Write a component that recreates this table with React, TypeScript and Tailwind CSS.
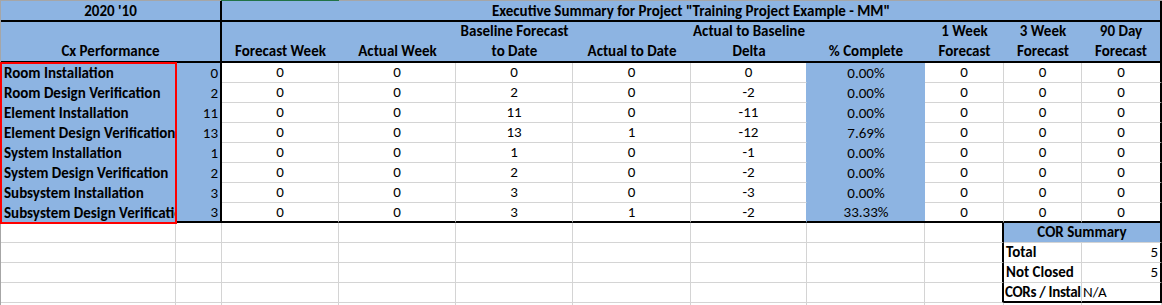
import React from "react";

type Row = {
  label: string;
  count: number;
  values: (number | string)[];
  pct: string;
  forecasts: number[];
};

const rows: Row[] = [
  { label: "Room Installation", count: 0, values: [0, 0, 0, 0, 0], pct: "0.00%", forecasts: [0, 0, 0] },
  { label: "Room Design Verification", count: 2, values: [0, 0, 2, 0, -2], pct: "0.00%", forecasts: [0, 0, 0] },
  { label: "Element Installation", count: 11, values: [0, 0, 11, 0, -11], pct: "0.00%", forecasts: [0, 0, 0] },
  { label: "Element Design Verification", count: 13, values: [0, 0, 13, 1, -12], pct: "7.69%", forecasts: [0, 0, 0] },
  { label: "System Installation", count: 1, values: [0, 0, 1, 0, -1], pct: "0.00%", forecasts: [0, 0, 0] },
  { label: "System Design Verification", count: 2, values: [0, 0, 2, 0, -2], pct: "0.00%", forecasts: [0, 0, 0] },
  { label: "Subsystem Installation", count: 3, values: [0, 0, 3, 0, -3], pct: "0.00%", forecasts: [0, 0, 0] },
  { label: "Subsystem Design Verification", count: 3, values: [0, 0, 3, 1, -2], pct: "33.33%", forecasts: [0, 0, 0] },
];

const headers = [
  ["", "Forecast Week"],
  ["", "Actual Week"],
  ["Baseline Forecast", "to Date"],
  ["", "Actual to Date"],
  ["Actual to Baseline", "Delta"],
  ["", "% Complete"],
  ["1 Week", "Forecast"],
  ["3 Week", "Forecast"],
  ["90 Day", "Forecast"],
];

const grid = "border-r border-b border-r-[#d4d4d4] border-b-[#d4d4d4]";

export default function App() {
  return (
    <div
      className="relative w-[1162px] h-[305px] overflow-hidden bg-white text-[15px] text-black"
      style={{ fontFamily: "Calibri, Carlito, 'Open Sans', 'Liberation Sans', sans-serif" }}
    >
      {/* sheet top edge with selected column marker */}
      <div className="flex h-px">
        <div className="w-[221px] bg-[#a6a6a6]" />
        <div className="w-[118px] bg-[#217346]" />
        <div className="flex-1 bg-[#a6a6a6]" />
      </div>

      <div className="grid grid-cols-[175px_46px_117px_117px_117px_118px_116px_118px_79px_78px_80px] border-l border-l-[#a6a6a6]">
        {/* row 1 */}
        <div className="col-span-2 h-[21px] flex items-center justify-center pt-px font-bold bg-[#8db4e2] border-r-2 border-b-2 border-black">
          2020 '10
        </div>
        <div className="col-span-9 h-[21px] flex items-center justify-center pt-px font-bold bg-[#8db4e2] border-r-2 border-b-2 border-black">
          Executive Summary for Project "Training Project Example - MM"
        </div>

        {/* row 2 */}
        <div className="col-span-2 h-[41px] flex flex-col justify-end items-center leading-[20px] font-bold bg-[#8db4e2] border-r-2 border-b-2 border-black">
          Cx Performance
        </div>
        {headers.map(([a, b], i) => (
          <div
            key={b + i}
            className={`h-[41px] flex flex-col justify-end items-center leading-[20px] font-bold bg-[#8db4e2] border-b-2 border-black whitespace-nowrap ${
              i === headers.length - 1 ? "border-r-2" : ""
            }`}
          >
            {a && <span>{a}</span>}
            <span>{b}</span>
          </div>
        ))}

        {/* data rows */}
        {rows.map((r, ri) => {
          const last = ri === rows.length - 1;
          const bottom = last ? "border-b-2 border-b-black" : "border-b border-b-[#d4d4d4]";
          return (
            <React.Fragment key={r.label}>
              <div className="h-[20px] flex items-center pl-[3px] font-bold bg-[#8db4e2] whitespace-nowrap overflow-hidden">
                {r.label}
              </div>
              <div
                className={`h-[20px] flex items-center justify-end pr-[2px] bg-[#8db4e2] border-r-2 border-r-black ${
                  last ? "border-b-2 border-b-black" : ""
                }`}
              >
                {r.count}
              </div>
              {r.values.map((v, vi) => (
                <div
                  key={vi}
                  className={`h-[20px] flex items-center justify-center border-r ${
                    vi === 4 ? "border-r-[#8db4e2]" : "border-r-[#d4d4d4]"
                  } ${bottom}`}
                >
                  {v}
                </div>
              ))}
              <div
                className={`h-[20px] flex items-center justify-center bg-[#8db4e2] ${
                  last ? "border-b-2 border-b-black" : ""
                }`}
              >
                {r.pct}
              </div>
              {r.forecasts.map((v, vi) => (
                <div
                  key={vi}
                  className={`h-[20px] flex items-center justify-center ${bottom} ${
                    vi === 2 ? "border-r-2 border-r-black" : "border-r border-r-[#d4d4d4]"
                  }`}
                >
                  {v}
                </div>
              ))}
            </React.Fragment>
          );
        })}

        {/* empty rows with COR summary block */}
        {[0, 1, 2, 3, 4].map((ri) => (
          <React.Fragment key={"e" + ri}>
            {[0, 1, 2, 3, 4, 5, 6, 7].map((ci) => (
              <div key={ci} className={`h-[20px] ${grid}`} />
            ))}
            <div
              className={`h-[20px] border-b border-b-[#d4d4d4] ${
                ri < 4 ? "border-r-2 border-r-black" : "border-r border-r-[#d4d4d4]"
              }`}
            />
            {ri === 0 && (
              <div className="col-span-2 h-[20px] flex items-center justify-center font-bold bg-[#8db4e2] border-r-2 border-r-black border-b border-b-[#d4d4d4]">
                COR Summary
              </div>
            )}
            {ri === 1 && (
              <>
                <div className={`h-[20px] flex items-center pl-[2px] font-bold ${grid}`}>Total</div>
                <div className="h-[20px] flex items-center justify-end pr-[2px] border-r-2 border-r-black border-b border-b-[#d4d4d4]">
                  5
                </div>
              </>
            )}
            {ri === 2 && (
              <>
                <div className={`h-[20px] flex items-center pl-[2px] font-bold ${grid}`}>Not Closed</div>
                <div className="h-[20px] flex items-center justify-end pr-[2px] border-r-2 border-r-black border-b border-b-[#d4d4d4]">
                  5
                </div>
              </>
            )}
            {ri === 3 && (
              <>
                <div className="h-[20px] flex items-center pl-[1px] font-bold tracking-[-0.3px] whitespace-nowrap overflow-hidden border-r border-r-[#d4d4d4] border-b-2 border-b-black">
                  CORs / Instal
                </div>
                <div className="h-[20px] flex items-center pl-[1px] border-r-2 border-r-black border-b-2 border-b-black">
                  N/A
                </div>
              </>
            )}
            {ri === 4 && (
              <>
                <div className={`h-[20px] ${grid}`} />
                <div className={`h-[20px] ${grid}`} />
              </>
            )}
          </React.Fragment>
        ))}
      </div>

      {/* red highlight around the Cx Performance labels */}
      <div className="absolute left-0 top-[62px] w-[177px] h-[162px] border-[2px] border-[#ff0000] pointer-events-none" />
    </div>
  );
}
